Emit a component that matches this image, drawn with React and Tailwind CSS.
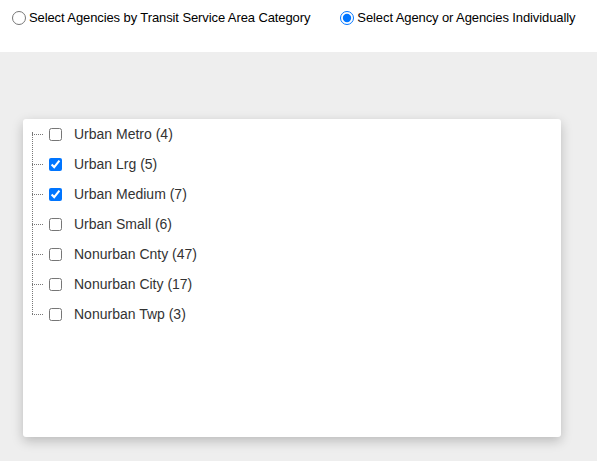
import React, { useState } from 'react'

const categories = [
  { id: 'metro', label: 'Urban Metro (4)', checked: false },
  { id: 'lrg', label: 'Urban Lrg (5)', checked: true },
  { id: 'medium', label: 'Urban Medium (7)', checked: true },
  { id: 'small', label: 'Urban Small (6)', checked: false },
  { id: 'cnty', label: 'Nonurban Cnty (47)', checked: false },
  { id: 'city', label: 'Nonurban City (17)', checked: false },
  { id: 'twp', label: 'Nonurban Twp (3)', checked: false },
]

export default function App() {
  const [mode, setMode] = useState('individual')
  const [items, setItems] = useState(categories)

  const toggle = (id) =>
    setItems((prev) => prev.map((i) => (i.id === id ? { ...i, checked: !i.checked } : i)))

  return (
    <div className="min-h-[461px] bg-[#eeeeee] font-['Liberation_Sans',Arial,sans-serif]">
      {/* Mode selector */}
      <div className="flex h-[52px] items-start whitespace-nowrap bg-white pt-[8px] text-[13px] tracking-[-0.1px] text-black">
        <label className="ml-[12px] flex shrink-0 items-center gap-[3px]">
          <input
            type="radio"
            name="mode"
            className="m-0 h-[14px] w-[14px] accent-[#0075ff]"
            checked={mode === 'category'}
            onChange={() => setMode('category')}
          />
          Select Agencies by Transit Service Area Category
        </label>
        <label className="ml-[30px] flex shrink-0 items-center gap-[3px]">
          <input
            type="radio"
            name="mode"
            className="m-0 h-[14px] w-[14px] accent-[#0075ff]"
            checked={mode === 'individual'}
            onChange={() => setMode('individual')}
          />
          Select Agency or Agencies Individually
        </label>
      </div>

      {/* Category tree */}
      <div className="px-[23px] pt-[67px] pb-[24px]">
        <div className="h-[318px] w-[538px] rounded-[3px] bg-white pl-[9px] shadow-[0_4px_12px_rgba(0,0,0,0.22)]">
          <div className="relative">
            <div className="absolute top-[13px] left-0 h-[182px] border-l border-dotted border-[#777]" />
            {items.map((item) => (
              <label key={item.id} className="flex h-[30px] items-center text-[14px] text-[#333]">
                <span className="w-[11px] border-t border-dotted border-[#777]" />
                <input
                  type="checkbox"
                  className="m-0 ml-[6px] h-[13px] w-[13px] accent-[#0075ff]"
                  checked={item.checked}
                  onChange={() => toggle(item.id)}
                />
                <span className="ml-[12px]">{item.label}</span>
              </label>
            ))}
          </div>
        </div>
      </div>
    </div>
  )
}
